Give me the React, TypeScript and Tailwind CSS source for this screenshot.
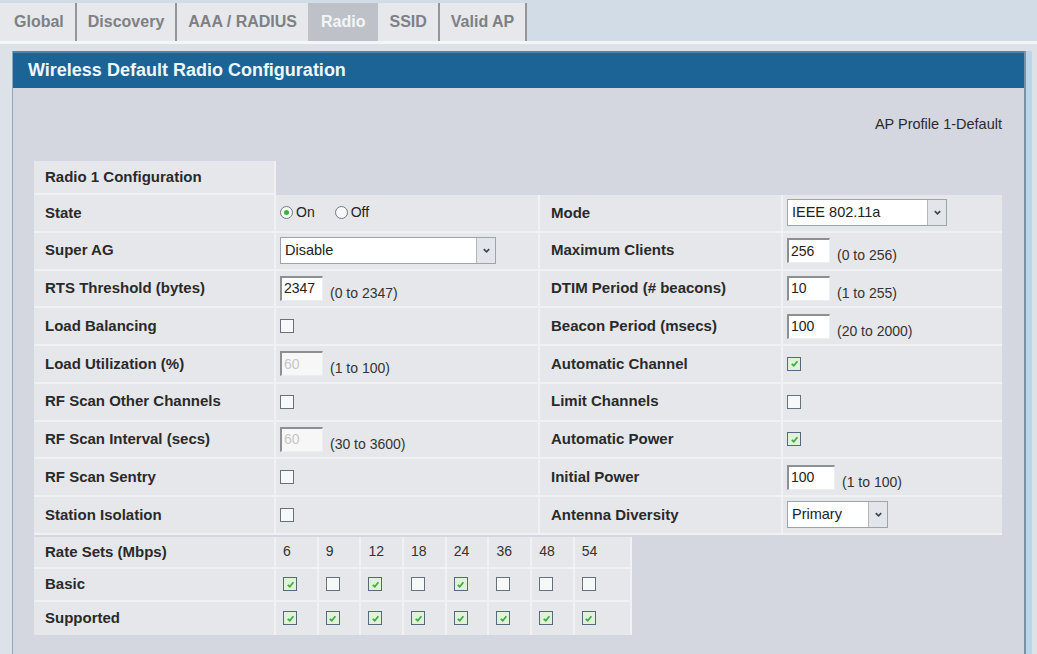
import React from 'react'

const Check = ({ on }: { on?: boolean }) => (
  <span
    className={
      on
        ? 'inline-flex h-[14px] w-[14px] items-center justify-center border border-[#55687c] bg-[#e2f1db]'
        : 'inline-flex h-[14px] w-[14px] items-center justify-center border border-[#67717c] bg-[#f7f8f9]'
    }
  >
    {on && (
      <svg viewBox="0 0 10 10" className="h-[9px] w-[9px]">
        <path d="M2 5.3 L4.2 7.5 L8.2 2.5" fill="none" stroke="#3fae3a" strokeWidth="2" />
      </svg>
    )}
  </span>
)

const Field = ({ value, range, off, w = 'w-[43px]' }: { value: string; range?: string; off?: boolean; w?: string }) => (
  <div className="flex items-end gap-[7px]">
    <span
      className={`flex h-[25px] ${w} items-center border-t-2 border-l-2 border-t-[#8d8f92] border-l-[#8d8f92] border-b border-r border-b-[#eceef0] border-r-[#eceef0] pl-[2px] text-[14px] ${
        off ? 'bg-[#f7f7f7] text-[#c6c6c6]' : 'bg-white text-[#222]'
      }`}
    >
      {value}
    </span>
    {range && <span className="mb-[-3px] text-[14px] text-[#333]">{range}</span>}
  </div>
)

const Select = ({ value, w }: { value: string; w: string }) => (
  <div className={`flex h-[27px] ${w} items-stretch border border-[#9ea4ab] bg-white`}>
    <span className="flex flex-1 items-center pl-[4px] text-[14.5px] text-[#222]">{value}</span>
    <span className="flex w-[19px] items-center justify-center border-l border-[#b5b9be] bg-[#e2e5e9]">
      <svg viewBox="0 0 10 10" className="h-[9px] w-[9px]">
        <path d="M2 3.5 L5 6.5 L8 3.5" fill="none" stroke="#3b4a5c" strokeWidth="2" />
      </svg>
    </span>
  </div>
)

const Radio = ({ on, label }: { on?: boolean; label: string }) => (
  <span className="flex items-center gap-[3px] text-[14px] text-[#222]">
    <span className="flex h-[13px] w-[13px] items-center justify-center rounded-full border border-[#6f7882] bg-[#f7f8f9]">
      {on && <span className="h-[5px] w-[5px] rounded-full bg-[#3fae3a]" />}
    </span>
    {label}
  </span>
)

const rows: [string, React.ReactNode, string, React.ReactNode][] = [
  [
    'State',
    <div className="flex gap-[20px]"><Radio on label="On" /><Radio label="Off" /></div>,
    'Mode',
    <Select value="IEEE 802.11a" w="w-[160px]" />,
  ],
  ['Super AG', <Select value="Disable" w="w-[216px]" />, 'Maximum Clients', <Field value="256" range="(0 to 256)" />],
  ['RTS Threshold (bytes)', <Field value="2347" range="(0 to 2347)" />, 'DTIM Period (# beacons)', <Field value="10" range="(1 to 255)" />],
  ['Load Balancing', <Check />, 'Beacon Period (msecs)', <Field value="100" range="(20 to 2000)" />],
  ['Load Utilization (%)', <Field value="60" off range="(1 to 100)" />, 'Automatic Channel', <Check on />],
  ['RF Scan Other Channels', <Check />, 'Limit Channels', <Check />],
  ['RF Scan Interval (secs)', <Field value="60" off range="(30 to 3600)" />, 'Automatic Power', <Check on />],
  ['RF Scan Sentry', <Check />, 'Initial Power', <Field value="100" w="w-[48px]" range="(1 to 100)" />],
  ['Station Isolation', <Check />, 'Antenna Diversity', <Select value="Primary" w="w-[101px]" />],
]

const rates = ['6', '9', '12', '18', '24', '36', '48', '54']
const basic = [true, false, true, false, true, false, false, false]

const tabs = ['Global', 'Discovery', 'AAA / RADIUS', 'Radio', 'SSID', 'Valid AP']

export default function App() {
  return (
    <div className="h-[654px] w-[1037px] overflow-hidden bg-[#dde2e8] font-['Liberation_Sans',Arial,sans-serif]">
      {/* tab strip */}
      <div className="flex h-[41px] bg-[#d1dce6] pt-[3px]">
        <div className="flex bg-[#e6e8eb] pl-[3px]">
          {tabs.map((t) =>
            t === 'Radio' ? (
              <div key={t} className="flex items-center bg-[#bec2c8] px-[13px] text-[16px] font-bold text-[#f4f5f6]">
                {t}
              </div>
            ) : (
              <div
                key={t}
                className={
                  t === 'AAA / RADIUS'
                    ? 'flex items-center px-[11px] text-[16px] font-bold text-[#7e8084]'
                    : 'flex items-center border-r-2 border-[#93969a] px-[11px] text-[16px] font-bold text-[#7e8084]'
                }
              >
                {t}
              </div>
            )
          )}
        </div>
      </div>
      <div className="h-[3px] bg-[#f3f5f7]" />

      {/* panel */}
      <div className="ml-[12px] mt-[7px] w-[1020px] border-l border-r-[6px] border-l-[#93a6b8] border-r-[#bcd5e8]">
        <div className="border-r-2 border-[#7c91a6]">
          <div className="flex h-[37px] items-center border-t-2 border-[#4a86b2] bg-[#1d6496] pl-[15px] text-[18px] font-bold text-[#eef7fd]">
            Wireless Default Radio Configuration
          </div>
          <div className="h-[570px] bg-[#d4d7e0] pl-[21px] pr-[22px]">
            <div className="flex h-[73px] items-center justify-end pt-[1px] text-[14.5px] text-[#2b2b2b]">
              AP Profile 1-Default
            </div>

            <div className="text-[15px] font-bold text-[#2a2a2a]">
              <div className="flex h-[34px]">
                <div className="flex w-[242px] items-center border-b-2 border-r-2 border-[#f1f1f3] bg-[#e6e7ea] pl-[11px]">
                  Radio 1 Configuration
                </div>
              </div>
              {rows.map(([a, av, b, bv]) => (
                <div key={a} className="grid h-[37.75px] grid-cols-[242px_264px_243px_219px]">
                  <div className="flex items-center border-b-2 border-r-2 border-[#f1f1f3] bg-[#e6e7ea] pl-[11px]">{a}</div>
                  <div className="flex items-center border-b-2 border-r-2 border-[#f1f1f3] bg-[#e6e7ea] pl-[4px] font-normal">{av}</div>
                  <div className="flex items-center border-b-2 border-r-2 border-[#f1f1f3] bg-[#e6e7ea] pl-[11px]">{b}</div>
                  <div className="flex items-center border-b-2 border-[#f1f1f3] bg-[#e6e7ea] pl-[4px] font-normal">{bv}</div>
                </div>
              ))}

              <div className="mt-[2px] grid grid-cols-[242px_repeat(7,42.7px)_57px]">
                <div className="flex h-[32px] items-center border-b-2 border-r-2 border-[#f1f1f3] bg-[#e6e7ea] pl-[11px]">Rate Sets (Mbps)</div>
                {rates.map((r) => (
                  <div key={r} className="flex h-[32px] items-end border-b-2 border-r-2 border-[#f1f1f3] bg-[#e6e7ea] pb-[5px] pl-[7px] text-[14px] font-normal text-[#333]">
                    {r}
                  </div>
                ))}
                <div className="flex h-[33px] items-center border-b-2 border-r-2 border-[#f1f1f3] bg-[#e6e7ea] pl-[11px]">Basic</div>
                {basic.map((on, i) => (
                  <div key={i} className="flex h-[33px] items-center border-b-2 border-r-2 border-[#f1f1f3] bg-[#e6e7ea] pl-[7px]">
                    <Check on={on} />
                  </div>
                ))}
                <div className="flex h-[33px] items-center border-r-2 border-[#f1f1f3] bg-[#e6e7ea] pl-[11px]">Supported</div>
                {rates.map((r) => (
                  <div key={r} className="flex h-[33px] items-center border-r-2 border-[#f1f1f3] bg-[#e6e7ea] pl-[7px]">
                    <Check on />
                  </div>
                ))}
              </div>
            </div>
          </div>
        </div>
      </div>
    </div>
  )
}
